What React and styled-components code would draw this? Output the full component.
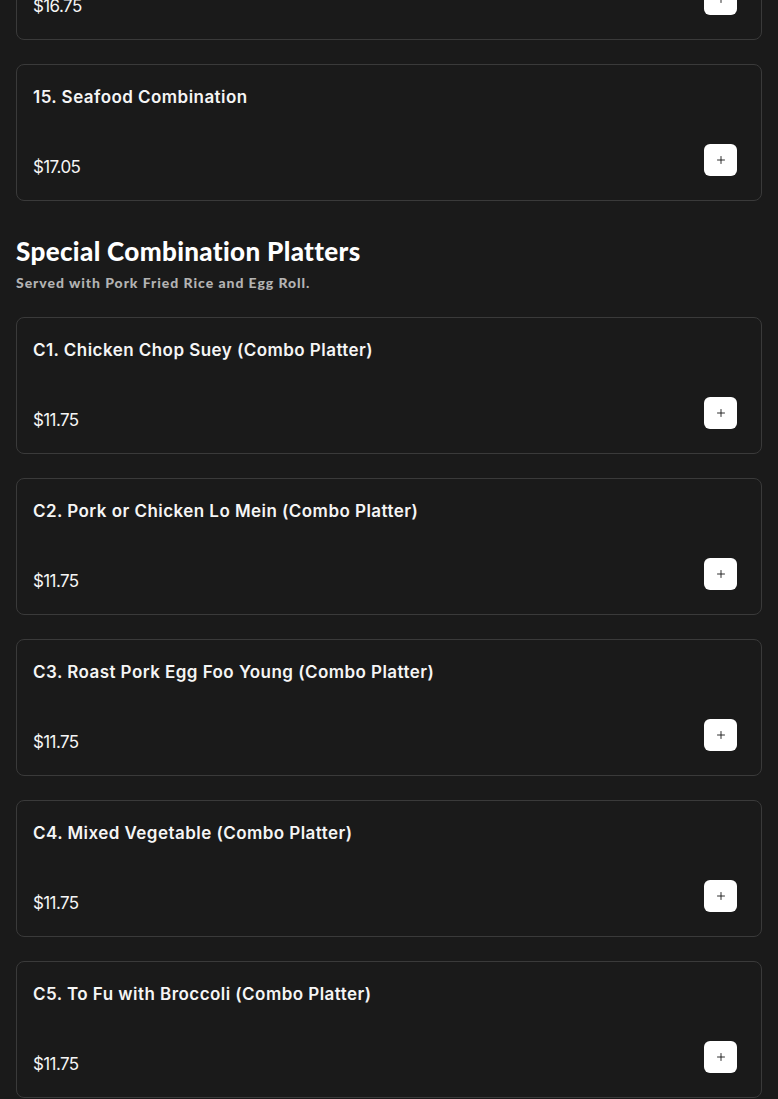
import React from 'react';
import styled, { createGlobalStyle } from 'styled-components';
import { Plus } from 'lucide-react';

const GlobalStyle = createGlobalStyle`
  html, body {
    margin: 0;
    padding: 0;
    background: #1a1a1a;
    overflow: hidden;
  }
  body {
    font-family: Inter, "Noto Sans", sans-serif;
    color: #fff;
  }
`;

const earlier = [{ name: '14. House Special Combination', price: '$16.75' }];

const seafood = [{ name: '15. Seafood Combination', price: '$17.05' }];

const platters = [
  { name: 'C1. Chicken Chop Suey (Combo Platter)', price: '$11.75' },
  { name: 'C2. Pork or Chicken Lo Mein (Combo Platter)', price: '$11.75' },
  { name: 'C3. Roast Pork Egg Foo Young (Combo Platter)', price: '$11.75' },
  { name: 'C4. Mixed Vegetable (Combo Platter)', price: '$11.75' },
  { name: 'C5. To Fu with Broccoli (Combo Platter)', price: '$11.75' },
];

const MenuItem = ({ item }) => (
  <Card>
    <ItemName>{item.name}</ItemName>
    <Bottom>
      <Price>{item.price}</Price>
      <AddButton aria-label="Add">
        <Plus size={12} strokeWidth={1.75} />
      </AddButton>
    </Bottom>
  </Card>
);

const App = () => {
  return (
    <>
      <GlobalStyle />
      <Page>
        <List>
          {earlier.map((item) => (
            <MenuItem key={item.name} item={item} />
          ))}
          {seafood.map((item) => (
            <MenuItem key={item.name} item={item} />
          ))}
        </List>

        <Section>
          <SectionTitle>Special Combination Platters</SectionTitle>
          <SectionNote>Served with Pork Fried Rice and Egg Roll.</SectionNote>
          <List>
            {platters.map((item) => (
              <MenuItem key={item.name} item={item} />
            ))}
          </List>
        </Section>
      </Page>
    </>
  );
};

export default App;

// Styled components
const Page = styled.main`
  padding: 0 16px;
  margin-top: -97px;
`;

const List = styled.div`
  display: flex;
  flex-direction: column;
  gap: 24px;
`;

const Section = styled.section`
  margin-top: 36px;
`;

const SectionTitle = styled.h2`
  margin: 0;
  font-family: Lato, "Noto Sans", sans-serif;
  font-weight: 900;
  font-size: 26px;
  line-height: 28px;
  color: #fff;
  letter-spacing: 0.35px;
`;

const SectionNote = styled.p`
  margin: 8px 0 24px;
  font-family: Lato, "Noto Sans", sans-serif;
  font-weight: 900;
  font-size: 14px;
  line-height: 20px;
  color: #b3b3b3;
  letter-spacing: 0.95px;
`;

const Card = styled.div`
  display: flex;
  flex-direction: column;
  gap: 35px;
  padding: 20px 24px 24px 16px;
  background: #1a1a1a;
  border: 1px solid #3a3a3a;
  border-radius: 8px;
`;

const ItemName = styled.h3`
  margin: 0;
  font-size: 17px;
  line-height: 24px;
  font-weight: 600;
  color: #f5f5f5;
  letter-spacing: 0.45px;
`;

const Bottom = styled.div`
  display: flex;
  align-items: flex-end;
  justify-content: space-between;
`;

const Price = styled.span`
  font-size: 17px;
  line-height: 18px;
  font-weight: 400;
  color: #f5f5f5;
  letter-spacing: -0.6px;
`;

const AddButton = styled.button`
  display: flex;
  align-items: center;
  justify-content: center;
  width: 33px;
  height: 32px;
  padding: 0;
  border: none;
  border-radius: 6px;
  background: #fff;
  color: #111;
  cursor: pointer;
`;
